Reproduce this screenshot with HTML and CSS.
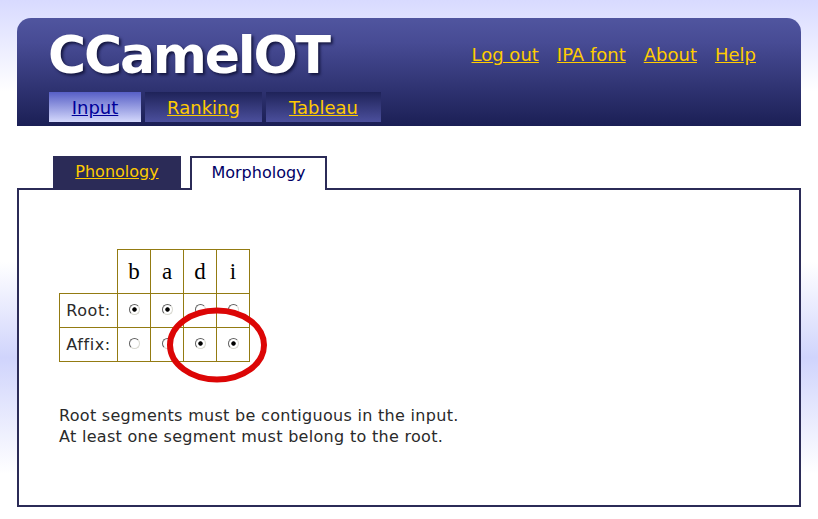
FILE: index.html
```html
<!DOCTYPE html>
<html lang="en">
<head>
<meta charset="utf-8">
<title>CCamelOT</title>
<link rel="stylesheet" href="styles.css">
</head>
<body>
<div class="page">
  <header class="banner">
    <div class="banner-top">
      <h1 class="logo">CCamelOT</h1>
      <nav class="util">
        <a href="#">Log out</a>
        <a href="#">IPA font</a>
        <a href="#">About</a>
        <a href="#">Help</a>
      </nav>
    </div>
    <nav class="steps">
      <a class="step step-active step-input" href="#">Input</a>
      <a class="step step-ranking" href="#">Ranking</a>
      <a class="step step-tableau" href="#">Tableau</a>
    </nav>
  </header>
  <div class="tabs">
    <a class="tab tab-off" href="#">Phonology</a>
    <span class="tab tab-on">Morphology</span>
  </div>
  <main class="panel">
    <div class="grid-wrap">
      <table class="grid">
        <tr class="seg-row">
          <td class="blank"></td><td>b</td><td>a</td><td>d</td><td>i</td>
        </tr>
        <tr>
          <th>Root:</th>
          <td><input type="radio" name="s1" checked></td>
          <td><input type="radio" name="s2" checked></td>
          <td><input type="radio" name="s3"></td>
          <td><input type="radio" name="s4"></td>
        </tr>
        <tr>
          <th>Affix:</th>
          <td><input type="radio" name="s1"></td>
          <td><input type="radio" name="s2"></td>
          <td><input type="radio" name="s3" checked></td>
          <td><input type="radio" name="s4" checked></td>
        </tr>
      </table>
      <svg class="circle" width="106" height="82" viewBox="0 0 106 82" aria-hidden="true">
        <ellipse cx="53" cy="40" rx="47" ry="34.5" fill="none" stroke="#dc0606" stroke-width="6"/>
      </svg>
    </div>
    <p class="note">Root segments must be contiguous in the input.<br>At least one segment must belong to the root.</p>
  </main>
</div>
</body>
</html>
```
FILE: styles.css
```css
html, body { margin: 0; padding: 0; }
body {
  height: 519px;
  overflow: hidden;
  font-family: "DejaVu Sans", sans-serif;
  background: linear-gradient(to bottom,
    #d8daff 0, #ffffff 92px, #ffffff 262px,
    #d0d4fc 358px, #ffffff 474px);
}
.page {
  width: 784px;
  margin-left: 17px;
  padding-top: 18px;
}
.banner {
  height: 108px;
  box-sizing: border-box;
  border-radius: 14px 14px 0 0;
  background: linear-gradient(to bottom, #50559f 0, #474b94 25px, #1b1f55 100%);
  padding: 0 0 0 32px;
  display: flex;
  flex-direction: column;
}
.banner-top {
  display: flex;
  justify-content: space-between;
  height: 74px;
}
.logo {
  margin: 6px 0 0 -1px;
  font-size: 52px;
  line-height: 62px;
  font-weight: bold;
  color: #fff;
  letter-spacing: -2.2px;
  text-shadow: 2px 2px 3px #14163f;
}
.util {
  display: flex;
  gap: 18px;
  padding: 26px 45px 0 0;
  font-size: 18px;
  line-height: 22px;
}
.util a { color: #ffcc00; }
.steps { display: flex; gap: 4px; height: 30px; }
.step {
  display: block;
  height: 30px;
  line-height: 31px;
  text-align: center;
  font-size: 18px;
  color: #ffcc00;
  background: linear-gradient(to bottom, #1f2359, #4b4f9c);
}
.step-input { width: 92px; }
.step-ranking { width: 117px; }
.step-tableau { width: 115px; }
.step-active {
  color: #000099;
  background: linear-gradient(to bottom, #575fc6, #d4d8fc);
}
.tabs {
  display: flex;
  align-items: flex-start;
  gap: 9px;
  padding: 30px 0 0 36px;
  position: relative;
  z-index: 1;
  height: 32px;
}
.tab {
  display: block;
  box-sizing: border-box;
  text-align: center;
  font-size: 16px;
}
.tab-off {
  width: 128px;
  height: 32px;
  line-height: 32px;
  background: #2b2b57;
  color: #ffcc00;
}
.tab-on {
  width: 137px;
  height: 34px;
  line-height: 30px;
  background: #fff;
  color: #000066;
  border: 2px solid #2b2b57;
  border-bottom: 0;
}
.panel {
  box-sizing: border-box;
  height: 319px;
  border: 2px solid #2b2b57;
  background: #fff;
  padding: 59px 0 0 40px;
}
.grid-wrap { position: relative; height: 130px; }
.grid {
  border-collapse: collapse;
  table-layout: fixed;
  width: 191px;
}
.grid th, .grid td {
  border: 1px solid #937b12;
  padding: 0;
  text-align: center;
  height: 34px;
  box-sizing: border-box;
}
.grid th {
  font-weight: normal;
  font-size: 16px;
  letter-spacing: 0.6px;
  color: #2a2a2a;
}
.grid td { width: 33px; line-height: 0; }
.grid .seg-row td {
  height: 43px;
  line-height: 43px;
  font-family: "Liberation Serif", serif;
  font-size: 23px;
  color: #000;
}
.grid .seg-row .blank {
  width: 58px;
  border: 0;
  border-right: 1px solid #937b12;
  border-bottom: 1px solid #937b12;
}
.grid input {
  appearance: none;
  -webkit-appearance: none;
  width: 11px;
  height: 11px;
  margin: 0 0 2px 0;
  border-radius: 50%;
  box-sizing: border-box;
  border: 1px solid;
  border-color: #606060 #d8d8d0 #d8d8d0 #606060;
  background: #fff;
  vertical-align: middle;
}
.grid input:checked {
  background: radial-gradient(circle at center, #000 0, #000 1.8px, #fff 2.6px);
}
.circle { position: absolute; left: 105px; top: 56px; }
.note {
  margin: 0;
  font-size: 16px;
  line-height: 21px;
  color: #2a2a2a;
  letter-spacing: 0.3px;
  padding-top: 26px;
}
```
